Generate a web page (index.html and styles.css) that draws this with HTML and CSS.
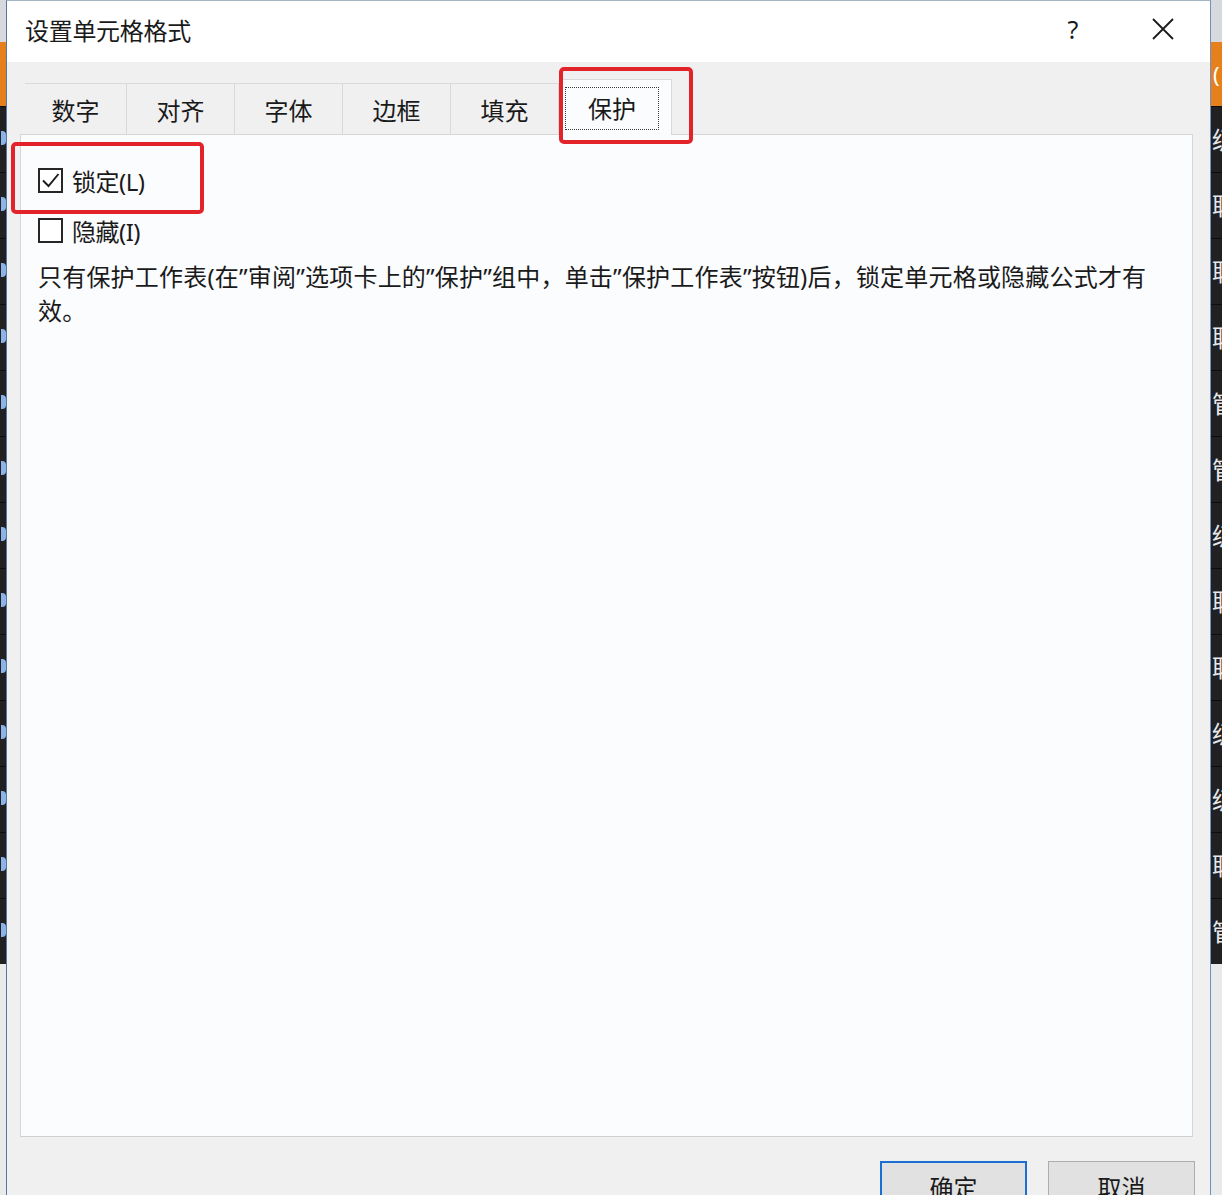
FILE: index.html
```html
<!DOCTYPE html>
<html lang="zh-CN">
<head>
<meta charset="utf-8">
<title>设置单元格格式</title>
<link rel="stylesheet" href="styles.css">
</head>
<body>
<div class="screen">
  <div class="strip strip-left">
    <div class="strip-top"></div>
    <div class="strip-orange"></div>
    <div class="strip-rows">
      <div class="srow"></div><div class="srow"></div><div class="srow"></div><div class="srow"></div>
      <div class="srow"></div><div class="srow"></div><div class="srow"></div><div class="srow"></div>
      <div class="srow"></div><div class="srow"></div><div class="srow"></div><div class="srow"></div>
      <div class="srow"></div>
    </div>
    <div class="strip-bottom"></div>
  </div>

  <div class="dialog">
    <div class="titlebar">
      <span class="title">设置单元格格式</span>
      <span class="help">?</span>
      <span class="close">
        <svg width="22" height="22" viewBox="0 0 22 22"><path d="M1 1 L21 21 M21 1 L1 21" stroke="#1a1a1a" stroke-width="1.8" fill="none"/></svg>
      </span>
    </div>
    <div class="dialog-body">
      <div class="tabs">
        <div class="tab first">数字</div>
        <div class="tab">对齐</div>
        <div class="tab">字体</div>
        <div class="tab">边框</div>
        <div class="tab">填充</div>
        <div class="tab active"><span class="focus">保护</span></div>
      </div>
      <div class="panel">
        <div class="check">
          <span class="box">
            <svg width="21" height="21" viewBox="0 0 21 21"><path d="M3 10.5 L8.5 16 L18.5 4" stroke="#1a1a1a" stroke-width="1.9" fill="none"/></svg>
          </span>
          <span class="label">锁定(L)</span>
        </div>
        <div class="check">
          <span class="box"></span>
          <span class="label">隐藏(I)</span>
        </div>
        <p class="desc">只有保护工作表(在”审阅”选项卡上的”保护”组中，单击”保护工作表”按钮)后，锁定单元格或隐藏公式才有效。</p>
      </div>
      <div class="buttons">
        <span class="btn primary">确定</span>
        <span class="btn">取消</span>
      </div>
    </div>
    <div class="mark mark-tab"></div>
    <div class="mark mark-lock"></div>
  </div>

  <div class="strip strip-right">
    <div class="strip-top"></div>
    <div class="strip-orange">(</div>
    <div class="strip-rows">
      <div class="srow">级</div><div class="srow">职</div><div class="srow">职</div><div class="srow">职</div>
      <div class="srow">管</div><div class="srow">管</div><div class="srow">级</div><div class="srow">职</div>
      <div class="srow">职</div><div class="srow">级</div><div class="srow">级</div><div class="srow">职</div>
      <div class="srow">管</div>
    </div>
    <div class="strip-bottom"></div>
  </div>
</div>
</body>
</html>
```

FILE: styles.css
```css
html, body {
  margin: 0;
  padding: 0;
}

body {
  font-family: "Noto Sans", "Noto Sans CJK SC", sans-serif;
  color: #161616;
  background: #e9eaec;
}

.screen {
  display: flex;
  height: 1195px;
  overflow: hidden;
}

/* backdrop strips */
.strip {
  display: flex;
  flex-direction: column;
  overflow: hidden;
  flex: none;
}

.strip-left { width: 6px; }
.strip-right { width: 11px; }

.strip-top {
  height: 42px;
  flex: none;
  background: #d6dadf;
}

.strip-orange {
  height: 64px;
  flex: none;
  background: #e6801c;
  color: #fff;
  font-size: 22px;
  line-height: 64px;
  padding-left: 2px;
}

.strip-rows {
  display: flex;
  flex-direction: column;
  flex: none;
  background: #212124;
}

.srow {
  height: 65px;
  flex: none;
  border-top: 1px solid #0d0d0f;
  color: #e8e8e8;
  font-size: 24px;
  line-height: 65px;
  padding-left: 1px;
  white-space: nowrap;
}

.strip-left .srow::before {
  content: "";
  display: block;
  width: 5px;
  height: 14px;
  margin-top: 24px;
  border-radius: 0 4px 4px 0;
  background: #8db4e8;
}

.strip-bottom {
  flex: 1;
  background: #e9eaec;
}

/* dialog */
.dialog {
  position: relative;
  width: 1205px;
  flex: none;
  box-sizing: border-box;
  border-left: 1px solid #56789f;
  border-right: 1px solid #6f91bb;
  border-top: 1px solid #a3b3bf;
  background: #f0f0f1;
  display: flex;
  flex-direction: column;
}

.titlebar {
  height: 61px;
  flex: none;
  box-sizing: border-box;
  background: #ffffff;
  display: flex;
  align-items: center;
  padding-left: 18px;
  padding-bottom: 5px;
}

.title {
  font-size: 24px;
  letter-spacing: -0.3px;
  color: #1a1a1a;
}

.help {
  margin-left: auto;
  width: 40px;
  text-align: center;
  font-size: 25px;
  color: #1a1a1a;
}

.close {
  width: 40px;
  height: 40px;
  margin-left: 50px;
  margin-right: 27px;
  display: flex;
  align-items: center;
  justify-content: center;
}

.dialog-body {
  flex: none;
  padding: 0 17px 0 13px;
  display: flex;
  flex-direction: column;
}

.tabs {
  display: flex;
  flex: none;
  align-items: flex-end;
  margin-left: 5px;
  margin-top: 17px;
  height: 56px;
  position: relative;
  z-index: 1;
  margin-bottom: -1px;
}

.tab {
  height: 51px;
  flex: none;
  box-sizing: border-box;
  width: 108px;
  border-top: 1px solid #d9d9d9;
  border-right: 1px solid #d9d9d9;
  display: flex;
  align-items: center;
  justify-content: center;
  font-size: 24px;
  color: #1a1a1a;
  margin-bottom: 1px;
}

.tab.first {
  width: 102px;
}

.tab.active {
  height: 56px;
  width: 111px;
  margin-left: 2px;
  margin-bottom: 0;
  background: #fbfcfe;
  border: 1px solid #d9d9d9;
  border-bottom: none;
  padding: 7px 12px 5px 3px;
  align-items: stretch;
  justify-content: stretch;
}

.focus {
  flex: 1;
  border: 1px dotted #3a3a3a;
  display: flex;
  align-items: center;
  justify-content: center;
  padding-bottom: 2px;
}

.panel {
  height: 1003px;
  flex: none;
  box-sizing: border-box;
  background: #fbfcfe;
  border: 1px solid #d6d6d6;
  border-bottom-color: #cfcfcf;
  padding: 33px 20px 0 17px;
}

.check {
  display: flex;
  align-items: center;
  height: 25px;
  gap: 9px;
}

.check + .check {
  margin-top: 25px;
}

.box {
  width: 25px;
  height: 25px;
  flex: none;
  box-sizing: border-box;
  border: 2px solid #262626;
  background: #ffffff;
  display: flex;
  align-items: center;
  justify-content: center;
}

.label {
  font-size: 24px;
  color: #1a1a1a;
  letter-spacing: -0.5px;
}

.desc {
  margin: 17px 0 0 0;
  max-width: 1130px;
  font-size: 24px;
  line-height: 34px;
  color: #1a1a1a;
  letter-spacing: 0.2px;
}

.buttons {
  display: flex;
  flex: none;
  justify-content: flex-end;
  gap: 21px;
  margin-top: 24px;
  margin-right: -2px;
}

.btn {
  width: 147px;
  height: 50px;
  flex: none;
  box-sizing: border-box;
  background: #e1e1e1;
  border: 1px solid #adadad;
  display: flex;
  align-items: center;
  justify-content: center;
  font-size: 24px;
  color: #1a1a1a;
}

.btn.primary {
  border: 2px solid #1a6fd0;
}

/* red annotation frames */
.mark {
  position: absolute;
  box-sizing: border-box;
  border: 4px solid #e3232a;
  border-radius: 5px;
  z-index: 2;
}

.mark-tab {
  left: 552px;
  top: 66px;
  width: 134px;
  height: 77px;
}

.mark-lock {
  left: 4px;
  top: 141px;
  width: 193px;
  height: 72px;
}
```
